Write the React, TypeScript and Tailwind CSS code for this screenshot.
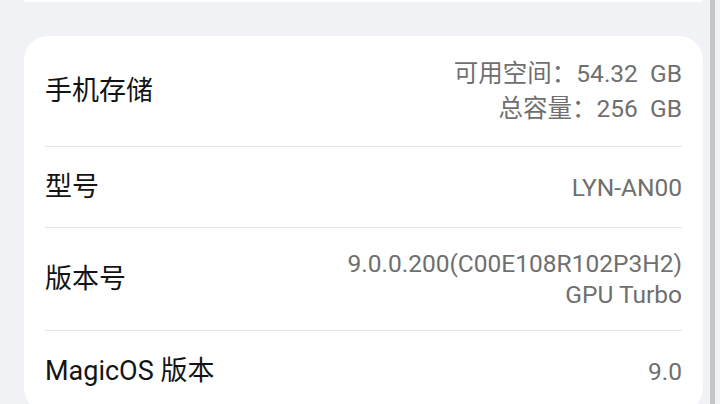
import React from "react";

const font = { fontFamily: 'Roboto, "Noto Sans CJK SC", "Noto Sans", sans-serif' };

interface RowProps {
  label: string;
  values: string[];
  lineClass: string;
  last?: boolean;
}

const Row: React.FC<RowProps> = ({ label, values, lineClass, last }) => (
  <div className={`flex items-center justify-between min-h-[81px] py-[20px] ${last ? "" : "border-b border-[#e6e6e8]"}`}>
    <div className="text-[27px] text-[#141414] leading-none">{label}</div>
    <div className="flex flex-col items-end text-[24.5px] text-[#6f6f6f]">
      {values.map((v) => (
        <div key={v} className={`${lineClass} whitespace-pre`}>
          {v}
        </div>
      ))}
    </div>
  </div>
);

export default function App() {
  return (
    <div className="relative w-[720px] h-[404px] overflow-hidden bg-[#f1f2f6]" style={font}>
      <div className="pl-[24px] pr-[17px]">
        <div className="h-[2px] bg-white rounded-b-[4px]" />
        <div className="mt-[34px] bg-white rounded-[24px] px-[21px]">
          <Row label="手机存储" values={["可用空间：54.32  GB", "总容量：256  GB"]} lineClass="leading-[35px]" />
          <Row label="型号" values={["LYN-AN00"]} lineClass="leading-[35px]" />
          <Row label="版本号" values={["9.0.0.200(C00E108R102P3H2)", "GPU Turbo"]} lineClass="leading-[31px]" />
          <Row label="MagicOS 版本" values={["9.0"]} lineClass="leading-[35px]" last />
        </div>
      </div>
      <div className="absolute top-0 bottom-0 left-[710px] w-[5px] bg-[#c4c5c9]" />
    </div>
  );
}
